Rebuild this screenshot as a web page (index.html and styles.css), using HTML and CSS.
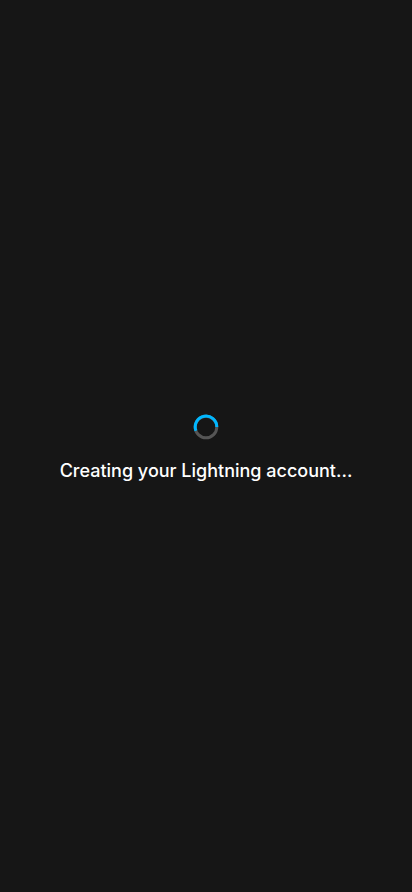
FILE: index.html
```
<!DOCTYPE html>
<html lang="en">
<head>
    <meta charset="UTF-8">
    <meta name="viewport" content="width=device-width, initial-scale=1.0">
    <title>Creating account</title>
    <link rel="stylesheet" href="styles.css">
</head>
<body>
    <main class="loading" role="status">
        <svg class="spinner" viewBox="0 0 26 26" aria-hidden="true">
            <circle class="spinner-track" cx="13" cy="13" r="10.8"/>
            <path class="spinner-arc" d="M2.9 16.7A10.8 10.8 0 1 1 23.8 13"/>
        </svg>
        <p class="loading-text">Creating your Lightning account...</p>
    </main>
</body>
</html>
```

FILE: styles.css
```
body {
    margin: 0;
    background: #161616;
    color: #fff;
    font-family: Inter, sans-serif;
}
.loading {
    display: flex;
    flex-direction: column;
    align-items: center;
    justify-content: center;
    gap: 16px;
    min-height: 100vh;
    padding-top: 8px;
    box-sizing: border-box;
}
.spinner {
    width: 26px;
    height: 26px;
    fill: none;
    stroke-width: 3;
}
.spinner-track {
    stroke: #555;
}
.spinner-arc {
    stroke: #00b7ff;
}
.loading-text {
    margin: 0;
    font-size: 18px;
    line-height: 30px;
    font-weight: 500;
}
```
